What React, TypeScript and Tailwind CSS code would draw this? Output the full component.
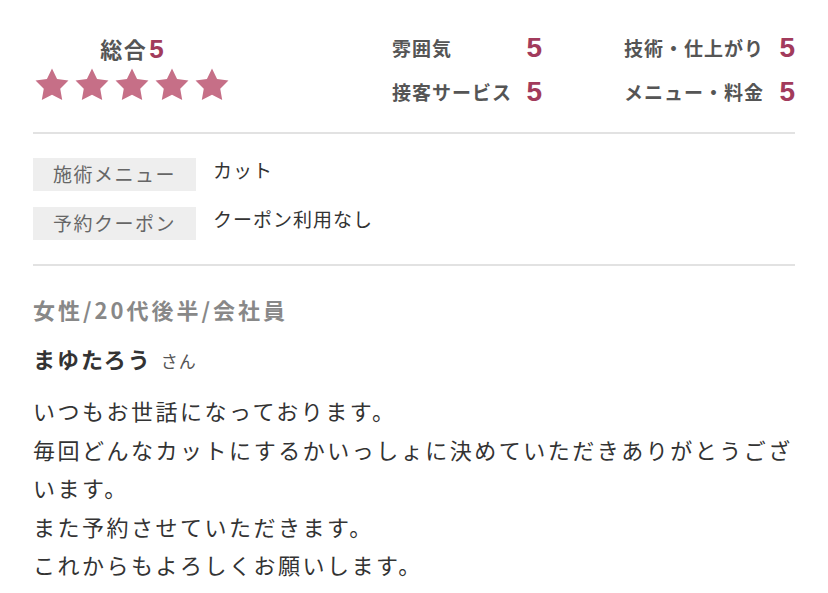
import React from "react";

const Star = () => (
  <svg viewBox="0 0 24 24" className="w-[38px] h-[38px]" fill="#c66f87">
    <path d="M12 1.6l3.2 6.6 7.2 1-5.2 5.1 1.25 7.2L12 18.1l-6.45 3.4 1.25-7.2L1.6 9.2l7.2-1z" />
  </svg>
);

const scores = [
  { label: "雰囲気", value: 5 },
  { label: "技術・仕上がり", value: 5 },
  { label: "接客サービス", value: 5 },
  { label: "メニュー・料金", value: 5 },
];

const details = [
  { label: "施術メニュー", value: "カット" },
  { label: "予約クーポン", value: "クーポン利用なし" },
];

const comment = [
  "いつもお世話になっております。",
  "毎回どんなカットにするかいっしょに決めていただきありがとうございます。",
  "また予約させていただきます。",
  "これからもよろしくお願いします。",
];

export default function App() {
  return (
    <div className="w-[828px] h-[593px] bg-white px-[33px] pt-[26px] font-['Noto_Sans_CJK_JP','Noto_Sans',sans-serif] text-[#333]">
      {/* Ratings */}
      <div className="flex pb-[18px] border-b-2 border-[#e2e2e2]">
        <div className="w-[198px] flex flex-col items-center">
          <div className="flex items-baseline h-[44px] pt-[4px]">
            <span className="text-[22px] font-bold text-[#555] tracking-[1.5px]">総合</span>
            <span className="text-[26px] font-semibold text-[#a23b5c] ml-[2px] font-['Liberation_Sans',sans-serif]">5</span>
          </div>
          <div className="flex gap-[2px] mt-[-4px]">
            <Star />
            <Star />
            <Star />
            <Star />
            <Star />
          </div>
        </div>
        <div className="ml-auto grid grid-cols-[150px_171px] gap-x-[82px]">
          {scores.map((s) => (
            <div key={s.label} className="flex items-center justify-between h-[44px]">
              <span className="text-[19px] font-bold text-[#555] tracking-[1px]">{s.label}</span>
              <span className="text-[28px] font-semibold text-[#a23b5c] font-['Liberation_Sans',sans-serif]">
                {s.value}
              </span>
            </div>
          ))}
        </div>
      </div>

      {/* Menu / coupon */}
      <div className="flex flex-col gap-[16px] pt-[24px] pb-[24px] border-b-2 border-[#e2e2e2]">
        {details.map((d) => (
          <div key={d.label} className="flex items-center">
            <div className="w-[163px] h-[33px] bg-[#eeeeee] flex items-center justify-center text-[19px] text-[#666] tracking-[1.5px]">
              {d.label}
            </div>
            <div className="ml-[17px] text-[19px] text-[#333] tracking-[1px] -mt-[8px]">{d.value}</div>
          </div>
        ))}
      </div>

      {/* Reviewer */}
      <div className="pt-[28px]">
        <div className="text-[22px] font-bold text-[#888] tracking-[3px] leading-[30px]">女性/20代後半/会社員</div>
        <div className="mt-[18px] flex items-baseline leading-[32px]">
          <span className="text-[22px] font-bold text-[#333] tracking-[2px]">まゆたろう</span>
          <span className="ml-[9px] text-[17px] text-[#555] tracking-[1px]">さん</span>
        </div>
        <div className="mt-[14px] text-[22px] leading-[38.5px] tracking-[2.5px] text-[#333]">
          {comment.map((line) => (
            <p key={line}>{line}</p>
          ))}
        </div>
      </div>
    </div>
  );
}
